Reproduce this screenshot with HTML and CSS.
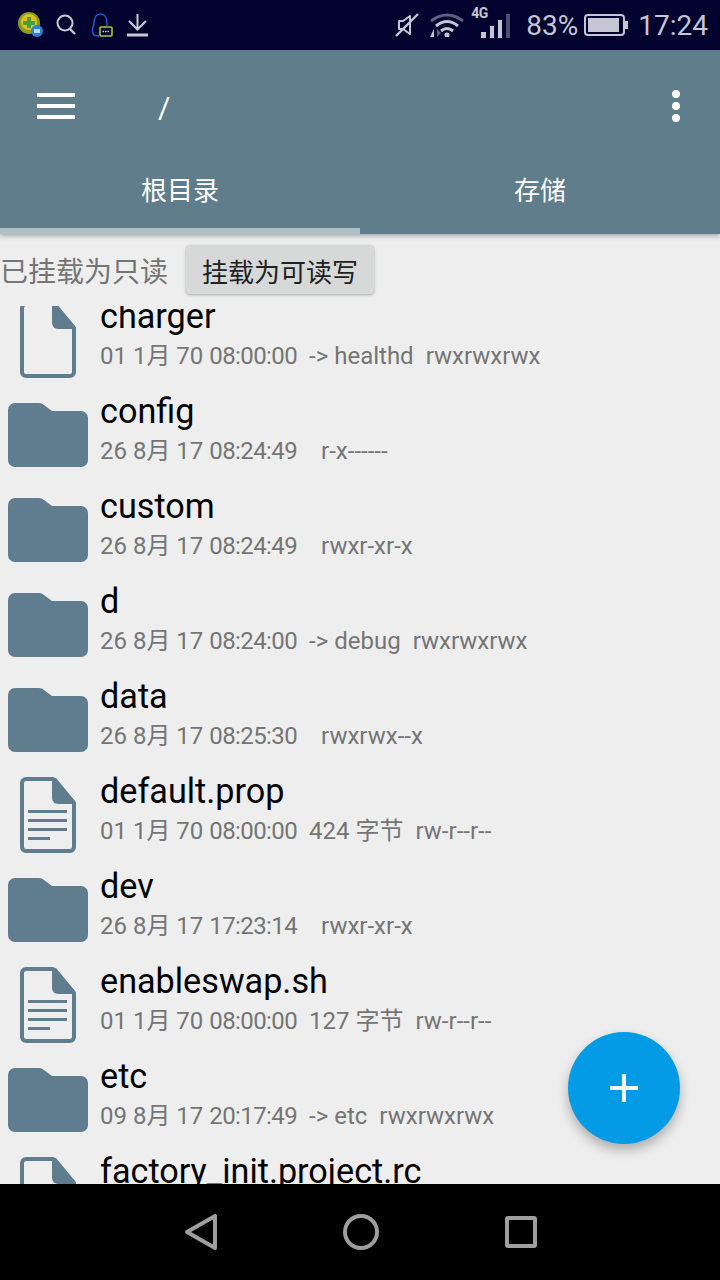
FILE: index.html
```html
<!DOCTYPE html>
<html lang="zh-CN">

<head>
    <meta charset="UTF-8">
    <meta name="viewport" content="width=device-width, initial-scale=1.0">
    <title>Root Explorer</title>
    <link rel="stylesheet" href="styles.css">
</head>

<body>
    <svg class="icon-defs" width="0" height="0">
        <symbol id="folder" viewBox="0 0 80 64">
            <path fill="#5f7d8e" d="M7 0H31Q34 0 36 2L44 8H73a7 7 0 0 1 7 7V57a7 7 0 0 1-7 7H7a7 7 0 0 1-7-7V7a7 7 0 0 1 7-7z" />
        </symbol>
        <symbol id="file" viewBox="0 0 56 76">
            <path fill="none" stroke="#5f7d8e" stroke-width="4" stroke-linejoin="round" d="M6 2H33L54 26V70a4 4 0 0 1-4 4H6a4 4 0 0 1-4-4V6a4 4 0 0 1 4-4z" />
            <path fill="#5f7d8e" d="M32 1H36L55 24V27H38a6 6 0 0 1-6-6z" />
        </symbol>
        <symbol id="file-text" viewBox="0 0 56 76">
            <use href="#file" width="56" height="76" />
            <path fill="#5f7d8e" d="M8 33H47V36H8zM8 42H47V45H8zM8 51H47V54H8zM8 60H30V63H8z" />
        </symbol>
    </svg>

    <div class="phone">
        <div class="status-bar">
            <div class="status-left">
                <svg class="st-ball" width="26" height="28" viewBox="0 0 26 28">
                    <circle cx="11" cy="12" r="11" fill="#8a9a1e" />
                    <circle cx="11" cy="11" r="8" fill="#d8c321" />
                    <path d="M9 6h4v4h4v4h-4v3H9v-3H5v-4h4z" fill="#4f9a3a" />
                    <circle cx="19" cy="20" r="6" fill="#2f7fd8" />
                    <rect x="16" y="18" width="6" height="4" fill="#bcd8f5" />
                </svg>
                <svg class="st-search" width="20" height="22" viewBox="0 0 20 22">
                    <circle cx="9" cy="9" r="7.5" fill="none" stroke="#c9c9d6" stroke-width="2" />
                    <path d="M14 15l5 5" stroke="#c9c9d6" stroke-width="2.4" />
                </svg>
                <svg class="st-qq" width="23" height="25" viewBox="0 0 23 25">
                    <path d="M8 23C4 23 2 22 2 20 0 16 3 14 3 10 3 4 6 1 9.500 1S16 4 16 10V13" fill="none" stroke="#1d5fd0" stroke-width="1.500" />
                    <rect x="9" y="14" width="12" height="9" rx="1" fill="#02022e" stroke="#9ecb32" stroke-width="1.600" />
                    <path d="M11.500 18.500h2M14 18.500h2M16.500 18.500h2" stroke="#c8e070" stroke-width="1.600" stroke-dasharray="1.500 1" />
                </svg>
                <svg class="st-download" width="21" height="24" viewBox="0 0 21 24">
                    <path d="M10.500 1V16M2 8l8.500 8.500L19 8" fill="none" stroke="#c9c9d6" stroke-width="2" />
                    <path d="M0 22H21" stroke="#c9c9d6" stroke-width="3" />
                </svg>
            </div>
            <div class="status-right">
                <svg width="24" height="24" viewBox="0 0 24 24">
                    <path d="M4 8H8L15 3V21L8 16H4z" fill="none" stroke="#c5c5d3" stroke-width="2" stroke-linejoin="round" />
                    <path d="M1 23L23 1" stroke="#c5c5d3" stroke-width="2.400" />
                </svg>
                <svg class="st-wifi" width="36" height="24" viewBox="0 0 36 24">
                    <path d="M2 8Q18-4 34 8" fill="none" stroke="#5d6180" stroke-width="3" />
                    <path d="M7 13Q18 4 29 13" fill="none" stroke="#c5c5d3" stroke-width="3" />
                    <path d="M12 18Q18 13 24 18" fill="none" stroke="#c5c5d3" stroke-width="3" />
                    <circle cx="18" cy="22" r="2.500" fill="#c5c5d3" />
                    <path d="M5 16V24H1z" fill="#c5c5d3" />
                    <path d="M8 16V24L12 20z" fill="#5d6180" />
                </svg>
                <div class="st-signal">
                    <span class="st-4g">4G</span>
                    <svg width="29" height="24" viewBox="0 0 29 24">
                        <rect x="0" y="18" width="5" height="6" fill="#c5c5d3" />
                        <rect x="9" y="12" width="4" height="12" fill="#c5c5d3" />
                        <rect x="17" y="6" width="4" height="18" fill="#c5c5d3" />
                        <rect x="25" y="0" width="4" height="24" fill="#4a4e70" />
                    </svg>
                </div>
                <span class="st-text st-percent">83%</span>
                <svg class="st-battery" width="44" height="22" viewBox="0 0 44 22">
                    <rect x="1" y="1" width="39" height="20" rx="3" fill="none" stroke="#c5c5d3" stroke-width="2" />
                    <rect x="4" y="4" width="31" height="14" fill="#c5c5d3" />
                    <rect x="41" y="7" width="3" height="8" fill="#c5c5d3" />
                </svg>
                <span class="st-text">17:24</span>
            </div>
        </div>

        <div class="toolbar">
            <div class="hamburger">
                <span></span>
                <span></span>
                <span></span>
            </div>
            <div class="path-title">/</div>
            <div class="more">
                <span></span>
                <span></span>
                <span></span>
            </div>
        </div>

        <div class="tabs">
            <div class="tab active">根目录</div>
            <div class="tab">存储</div>
        </div>

        <div class="mount-bar">
            <span class="mount-label">已挂载为只读</span>
            <button class="mount-button">挂载为可读写</button>
        </div>

        <div class="file-list">
            <div class="file-list-inner">
                <div class="row">
                    <div class="row-icon"><svg class="ic-file"><use href="#file" /></svg></div>
                    <div class="row-text">
                        <div class="row-name">charger</div>
                        <div class="row-meta"><span>01 1月 70 <span class="time">08:00:00</span></span><span class="meta-extra">-> healthd</span><span class="meta-perm">rwxrwxrwx</span></div>
                    </div>
                </div>
                <div class="row">
                    <div class="row-icon"><svg class="ic-folder"><use href="#folder" /></svg></div>
                    <div class="row-text">
                        <div class="row-name">config</div>
                        <div class="row-meta"><span>26 8月 17 <span class="time">08:24:49</span></span><span class="meta-extra"></span><span class="meta-perm">r-x------</span></div>
                    </div>
                </div>
                <div class="row">
                    <div class="row-icon"><svg class="ic-folder"><use href="#folder" /></svg></div>
                    <div class="row-text">
                        <div class="row-name">custom</div>
                        <div class="row-meta"><span>26 8月 17 <span class="time">08:24:49</span></span><span class="meta-extra"></span><span class="meta-perm">rwxr-xr-x</span></div>
                    </div>
                </div>
                <div class="row">
                    <div class="row-icon"><svg class="ic-folder"><use href="#folder" /></svg></div>
                    <div class="row-text">
                        <div class="row-name">d</div>
                        <div class="row-meta"><span>26 8月 17 <span class="time">08:24:00</span></span><span class="meta-extra">-> debug</span><span class="meta-perm">rwxrwxrwx</span></div>
                    </div>
                </div>
                <div class="row">
                    <div class="row-icon"><svg class="ic-folder"><use href="#folder" /></svg></div>
                    <div class="row-text">
                        <div class="row-name">data</div>
                        <div class="row-meta"><span>26 8月 17 <span class="time">08:25:30</span></span><span class="meta-extra"></span><span class="meta-perm">rwxrwx--x</span></div>
                    </div>
                </div>
                <div class="row">
                    <div class="row-icon"><svg class="ic-file"><use href="#file-text" /></svg></div>
                    <div class="row-text">
                        <div class="row-name">default.prop</div>
                        <div class="row-meta"><span>01 1月 70 <span class="time">08:00:00</span></span><span class="meta-extra">424 字节</span><span class="meta-perm">rw-r--r--</span></div>
                    </div>
                </div>
                <div class="row">
                    <div class="row-icon"><svg class="ic-folder"><use href="#folder" /></svg></div>
                    <div class="row-text">
                        <div class="row-name">dev</div>
                        <div class="row-meta"><span>26 8月 17 <span class="time">17:23:14</span></span><span class="meta-extra"></span><span class="meta-perm">rwxr-xr-x</span></div>
                    </div>
                </div>
                <div class="row">
                    <div class="row-icon"><svg class="ic-file"><use href="#file-text" /></svg></div>
                    <div class="row-text">
                        <div class="row-name">enableswap.sh</div>
                        <div class="row-meta"><span>01 1月 70 <span class="time">08:00:00</span></span><span class="meta-extra">127 字节</span><span class="meta-perm">rw-r--r--</span></div>
                    </div>
                </div>
                <div class="row">
                    <div class="row-icon"><svg class="ic-folder"><use href="#folder" /></svg></div>
                    <div class="row-text">
                        <div class="row-name">etc</div>
                        <div class="row-meta"><span>09 8月 17 <span class="time">20:17:49</span></span><span class="meta-extra">-> etc</span><span class="meta-perm">rwxrwxrwx</span></div>
                    </div>
                </div>
                <div class="row">
                    <div class="row-icon"><svg class="ic-file"><use href="#file" /></svg></div>
                    <div class="row-text">
                        <div class="row-name">factory_init.project.rc</div>
                    </div>
                </div>
            </div>
        </div>

        <div class="nav-bar">
            <svg width="34" height="38" viewBox="0 0 34 38">
                <path d="M31 3V35L3 19z" fill="none" stroke="#9e9e9e" stroke-width="4" stroke-linejoin="round" />
            </svg>
            <svg width="36" height="36" viewBox="0 0 36 36">
                <circle cx="18" cy="18" r="16" fill="none" stroke="#9e9e9e" stroke-width="4" />
            </svg>
            <svg class="nav-square" width="32" height="32" viewBox="0 0 32 32">
                <rect x="2" y="2" width="28" height="28" rx="1" fill="none" stroke="#9e9e9e" stroke-width="4" />
            </svg>
        </div>

        <div class="fab">
            <svg width="28" height="28" viewBox="0 0 28 28">
                <path d="M12 0H16V12H28V16H16V28H12V16H0V12H12z" fill="#f5fbff" />
            </svg>
        </div>
    </div>
</body>

</html>
```

FILE: styles.css
```css
* {
    box-sizing: border-box;
}

body {
    margin: 0;
    font-family: Roboto, "Noto Sans CJK SC", sans-serif;
    background-color: #eeeeee;
}

.icon-defs {
    position: absolute;
}

.phone {
    width: 720px;
    height: 1280px;
    display: flex;
    flex-direction: column;
    position: relative;
    overflow: hidden;
}

/* status bar */
.status-bar {
    height: 50px;
    flex: none;
    background-color: #02022e;
    display: flex;
    justify-content: space-between;
    align-items: center;
    padding: 0 12px 0 18px;
}

.status-left,
.status-right {
    display: flex;
    align-items: center;
}

.status-left svg {
    display: block;
}

.st-search {
    margin-left: 12px;
}

.st-qq {
    margin-left: 15px;
}

.st-download {
    margin-left: 13px;
}

.st-wifi {
    margin-left: 10px;
}

.st-signal {
    margin-left: 16px;
    position: relative;
    padding-top: 2px;
}

.st-signal svg {
    display: block;
}

.st-4g {
    position: absolute;
    left: -10px;
    top: -7px;
    font-size: 14px;
    font-weight: 700;
    letter-spacing: -0.5px;
    color: #c5c5d3;
}

.st-text {
    font-size: 28px;
    color: #c5c5d3;
}

.st-percent {
    margin-left: 16px;
}

.st-battery {
    margin: 0 10px 0 6px;
}

/* toolbar */
.toolbar {
    height: 100px;
    flex: none;
    background-color: #607d8b;
    display: flex;
    align-items: center;
    padding: 11px 40px 0 37px;
    position: relative;
    z-index: 1;
}

.hamburger {
    width: 38px;
    display: flex;
    flex-direction: column;
    gap: 7px;
}

.hamburger span {
    display: block;
    height: 4px;
    background-color: white;
}

.path-title {
    flex: 1;
    margin: 3px 0 0 83px;
    font-size: 30px;
    color: white;
}

.more {
    display: flex;
    flex-direction: column;
    gap: 4px;
}

.more span {
    display: block;
    width: 8px;
    height: 8px;
    border-radius: 50%;
    background-color: white;
}

/* tabs */
.tabs {
    height: 84px;
    flex: none;
    display: flex;
    background-color: #607d8b;
    box-shadow: 0 2px 5px rgba(0, 0, 0, 0.3);
    position: relative;
}

.tab {
    width: 50%;
    display: flex;
    align-items: center;
    justify-content: center;
    padding-bottom: 2px;
    color: white;
    font-size: 26px;
    border-bottom: 6px solid transparent;
}

.tab.active {
    border-bottom-color: #b0bec5;
}

/* mount bar */
.mount-bar {
    height: 72px;
    flex: none;
    display: flex;
    align-items: center;
    padding-bottom: 2px;
}

.mount-label {
    font-size: 28px;
    color: #757575;
    padding-top: 1px;
}

.mount-button {
    width: 188px;
    height: 49px;
    margin-left: 18px;
    border: none;
    border-radius: 4px;
    background-color: #d7d8d8;
    box-shadow: 0 1px 3px rgba(0, 0, 0, 0.3);
    color: #212121;
    font-family: inherit;
    font-size: 26px;
    padding: 2px 0 0;
}

/* file list */
.file-list {
    flex: 1;
    overflow: hidden;
}

.file-list-inner {
    margin-top: -13px;
}

.row {
    height: 95px;
    display: flex;
    align-items: center;
}

.row-icon {
    width: 96px;
    flex: none;
    display: flex;
    justify-content: center;
    padding-bottom: 1px;
}

.row-icon svg {
    display: block;
}

.ic-folder {
    width: 80px;
    height: 64px;
}

.ic-file {
    width: 56px;
    height: 76px;
}

.row-text {
    margin-left: 4px;
    align-self: flex-start;
    padding-top: 4px;
}

.row-name {
    height: 38px;
    line-height: 38px;
    font-size: 34.2px;
    color: black;
    white-space: nowrap;
}

.row-meta {
    height: 42px;
    line-height: 42px;
    font-size: 24px;
    color: #757575;
    display: flex;
    white-space: pre;
}

.time {
    letter-spacing: -0.6px;
}

.meta-extra {
    margin-left: 12px;
}

.meta-perm {
    margin-left: 12px;
}

/* nav bar */
.nav-bar {
    height: 96px;
    flex: none;
    background-color: black;
    display: flex;
    align-items: center;
    padding-left: 184px;
    gap: 125px;
}

.nav-square {
    margin-left: 1px;
}

.fab {
    position: absolute;
    left: 568px;
    top: 1032px;
    width: 112px;
    height: 112px;
    border-radius: 50%;
    background-color: #039be5;
    box-shadow: 0 6px 12px rgba(0, 0, 0, 0.28);
    display: flex;
    align-items: center;
    justify-content: center;
}
```
